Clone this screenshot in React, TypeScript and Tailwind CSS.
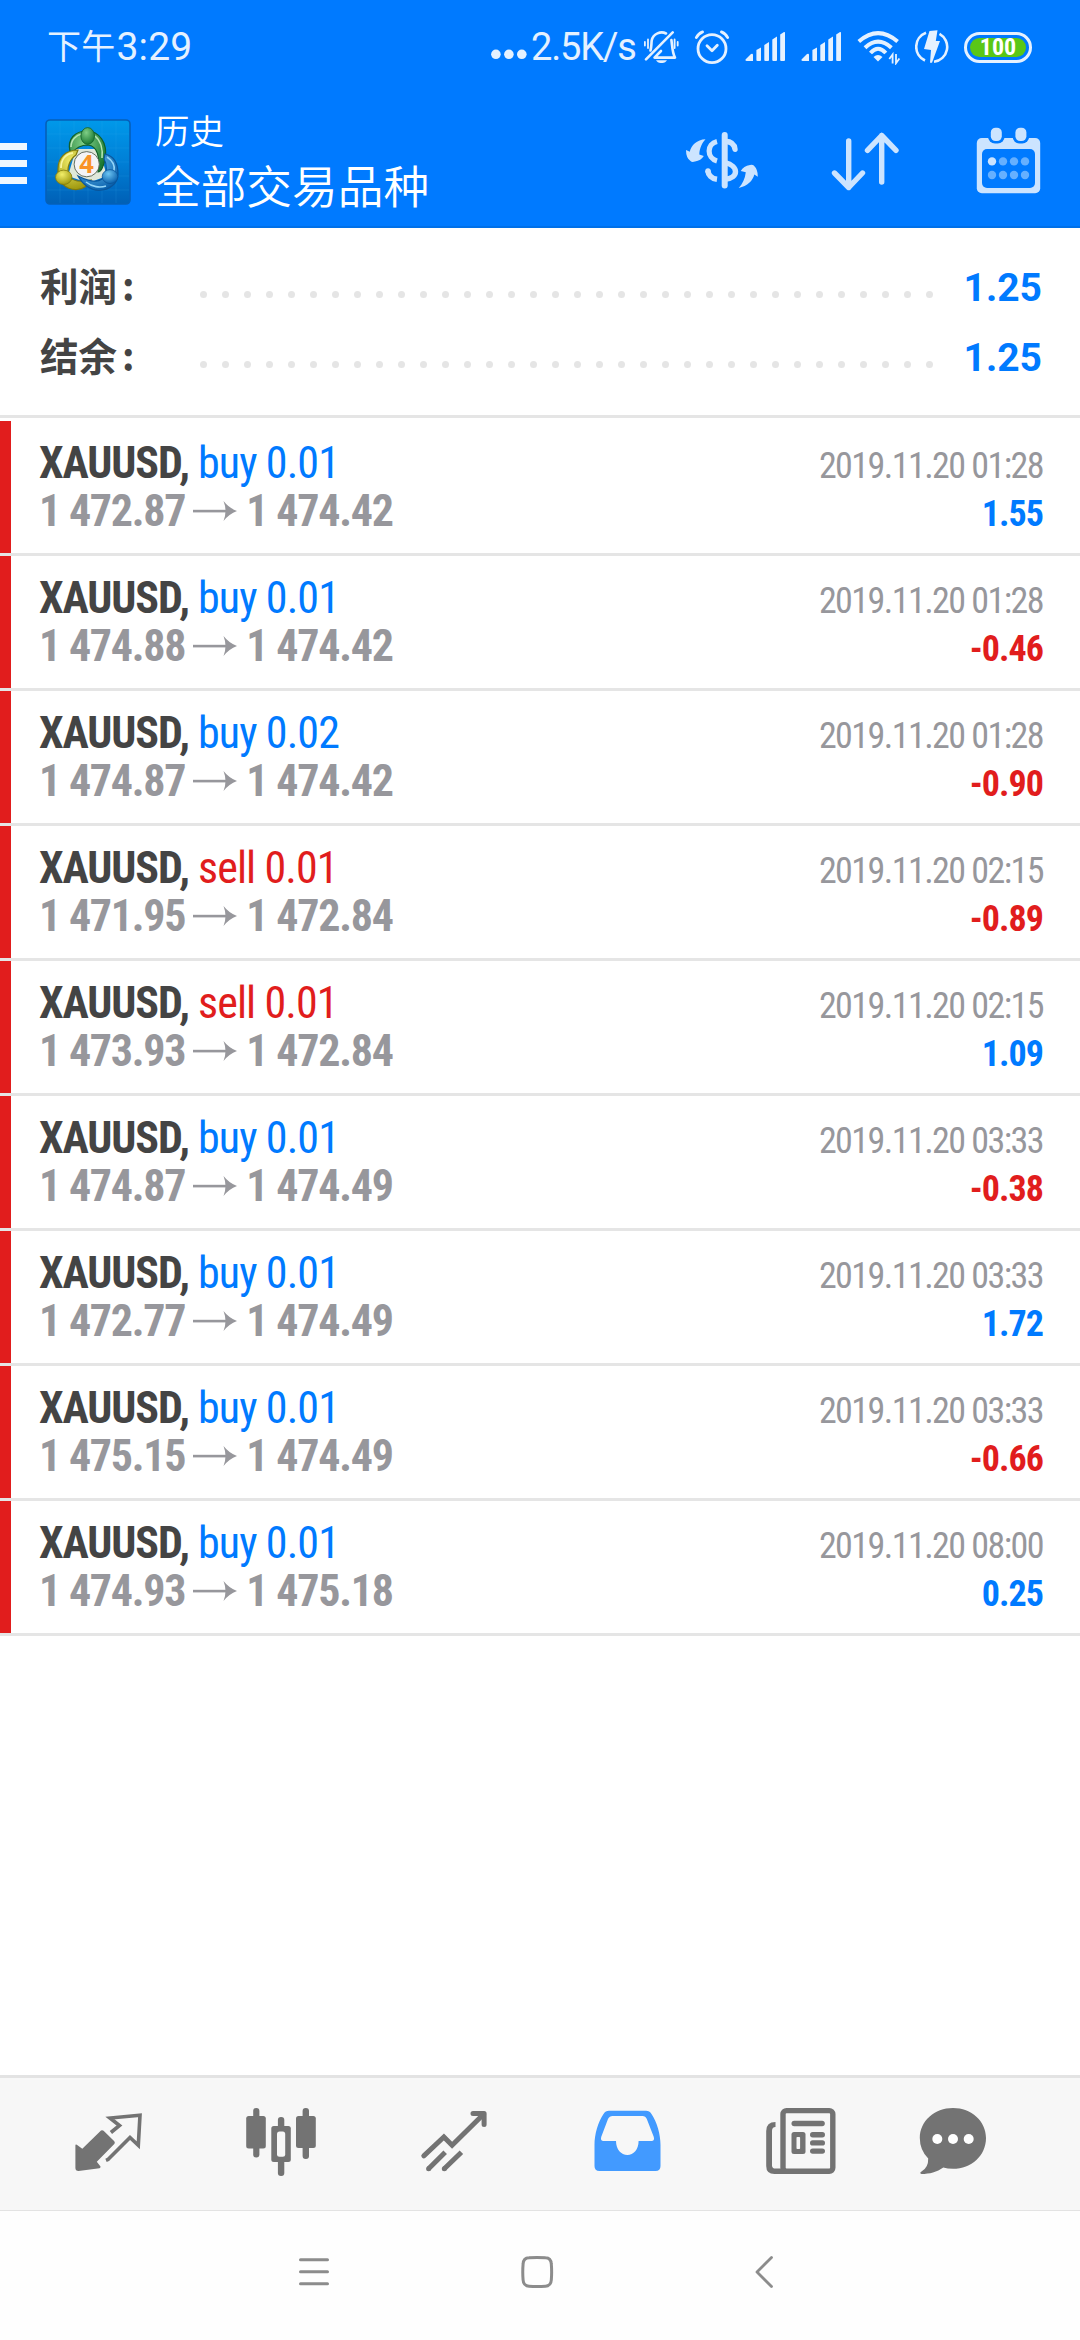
import type { ReactNode } from "react";

type Deal = {
  side: "buy" | "sell";
  volume: string;
  open: string;
  close: string;
  time: string;
  profit: string;
};

const deals: Deal[] = [
  { side: "buy", volume: "0.01", open: "1 472.87", close: "1 474.42", time: "2019.11.20 01:28", profit: "1.55" },
  { side: "buy", volume: "0.01", open: "1 474.88", close: "1 474.42", time: "2019.11.20 01:28", profit: "-0.46" },
  { side: "buy", volume: "0.02", open: "1 474.87", close: "1 474.42", time: "2019.11.20 01:28", profit: "-0.90" },
  { side: "sell", volume: "0.01", open: "1 471.95", close: "1 472.84", time: "2019.11.20 02:15", profit: "-0.89" },
  { side: "sell", volume: "0.01", open: "1 473.93", close: "1 472.84", time: "2019.11.20 02:15", profit: "1.09" },
  { side: "buy", volume: "0.01", open: "1 474.87", close: "1 474.49", time: "2019.11.20 03:33", profit: "-0.38" },
  { side: "buy", volume: "0.01", open: "1 472.77", close: "1 474.49", time: "2019.11.20 03:33", profit: "1.72" },
  { side: "buy", volume: "0.01", open: "1 475.15", close: "1 474.49", time: "2019.11.20 03:33", profit: "-0.66" },
  { side: "buy", volume: "0.01", open: "1 474.93", close: "1 475.18", time: "2019.11.20 08:00", profit: "0.25" },
];

function Signal() {
  return (
    <svg className="w-10 h-8" viewBox="745 29 40 32" fill="#e5f1ff">
      <path d="M745.5 57.5 L751 52 Q753 51 753 53 V59 H747 Q745 59 745.5 57.5 Z" />
      <path d="M756.4 48 L761 45.4 V58 Q761 59 760 59 H757.4 Q756.4 59 756.4 58 Z" />
      <path d="M764.3 43 L769 40 V58 Q769 59 768 59 H765.3 Q764.3 59 764.3 58 Z" />
      <path d="M772.3 37.5 L777 34.6 V58 Q777 59 776 59 H773.3 Q772.3 59 772.3 58 Z" />
      <path d="M780.2 32.5 L784 30 Q785 29.6 785 31 V58 Q785 59 784 59 H781.2 Q780.2 59 780.2 58 Z" />
    </svg>
  );
}

function StatusBar() {
  return (
    <div className="flex h-[92px] items-start pt-6 pl-[47px] pr-12 text-[#e5f1ff]">
      <span className="flex flex-1 font-['Roboto',sans-serif] text-[39px] leading-[46px] tracking-[0.2px] whitespace-nowrap">
        <span className="-mt-0.5 mr-px font-['Noto_Sans_CJK_SC',sans-serif] text-[34px]">下午</span>3:29
      </span>
      <svg className="mt-[24px] mr-1 h-3 w-9" viewBox="492 48 36 12" fill="#e5f1ff">
        <circle cx="496.9" cy="54.3" r="4.8" />
        <circle cx="509.9" cy="54.3" r="4.8" />
        <circle cx="522.8" cy="54.3" r="4.8" />
      </svg>
      <span className="w-[112px] font-['Roboto',sans-serif] text-[38px] leading-[46px] tracking-[-1.2px]">2.5K/s</span>
      <div className="flex items-center pt-[5px]">
        {/* Silent mode */}
        <svg className="h-8 w-9" viewBox="643 29 36 32" fill="none" stroke="#e5f1ff" strokeWidth="2.6" strokeLinecap="round">
          <path d="M646 57.3 L672.7 30.4" />
          <path d="M650.5 48.5 C651.5 45 651.3 42 651.7 38.5 C653 31.5 661 28.8 666 31.5" />
          <path d="M671.4 38 C672.4 44 672 50 675 55.6 H654.5 L661 49" strokeLinejoin="round" />
          <path d="M656 58.2 H667 C665 62 658 62 656 58.2 Z" fill="#e5f1ff" stroke="none" />
          <path d="M644.9 40 V43.5 M648 37.5 V46 M674.6 37.5 V46 M677.7 40 V43.5" strokeWidth="1.8" />
        </svg>
        {/* Alarm */}
        <svg className="ml-[15px] h-9 w-9" viewBox="694 27 36 36" fill="none" stroke="#e5f1ff" strokeWidth="2.8" strokeLinecap="round">
          <circle cx="712" cy="46.7" r="14" />
          <path d="M707 43.8 L712 48.8 L717.3 43.2" strokeLinejoin="round" />
          <path d="M696.3 35.6 Q698.5 31.5 702.6 29.9 M721.4 29.9 Q725.5 31.5 727.7 35.6" />
        </svg>
        <div className="ml-[15px] flex gap-4">
          <Signal />
          <Signal />
        </div>
        {/* Wi-Fi */}
        <svg className="ml-4 h-9 w-11" viewBox="857 28 44 36" fill="none" stroke="#e5f1ff" strokeWidth="4">
          <path d="M858.8 40.6 Q878 23.8 897.6 40.6" />
          <path d="M865 46.8 Q878 34.6 891.4 46.8" />
          <path d="M870.5 52 Q878 43.6 885.8 52" />
          <path d="M873.5 56 Q878 52 882.5 56 L878 60.5 Z" fill="#e5f1ff" stroke="none" />
          <path d="M892.6 62.5 V53.5 L889.3 58 M896 53 V62.2 L899.4 57.5" strokeWidth="1.8" />
        </svg>
        {/* Fast charge */}
        <svg className="ml-[14px] h-9 w-[34px]" viewBox="915 28 34 36" fill="none" stroke="#e5f1ff" strokeWidth="2.6">
          <path d="M926 31.8 A15 15 0 0 0 925 59.5 M939.5 32.8 A15 15 0 0 1 934 60.8" />
          <path d="M929.5 30 L937.5 29.3 L935.8 40 H940 L932 61.8 H930 L931 49 L924 48 Z" fill="#e5f1ff" stroke="none" />
        </svg>
        {/* Battery */}
        <div className="ml-[15px] flex h-[31px] w-[68px] rounded-full border-[3px] border-[#e5f1ff] p-[3px]">
          <div className="flex flex-1 items-center justify-center rounded-full bg-[#5ac716] font-['Roboto',sans-serif] font-stretch-condensed text-2xl leading-none font-bold text-white">
            100
          </div>
        </div>
      </div>
    </div>
  );
}

function AppIcon() {
  return (
    <svg className="h-[86px] w-[86px]" viewBox="45 119 86 86">
      <defs>
        <linearGradient id="tile" x1="0" y1="0" x2="0" y2="1">
          <stop offset="0" stopColor="#0099ea" />
          <stop offset="0.5" stopColor="#007fd6" />
          <stop offset="1" stopColor="#0060b6" />
        </linearGradient>
        <radialGradient id="green" cx="0.4" cy="0.3" r="0.7">
          <stop offset="0" stopColor="#7fce86" />
          <stop offset="1" stopColor="#1c7a33" />
        </radialGradient>
        <radialGradient id="yellow" cx="0.4" cy="0.3" r="0.7">
          <stop offset="0" stopColor="#f2ee6a" />
          <stop offset="1" stopColor="#a09a10" />
        </radialGradient>
        <radialGradient id="blue" cx="0.4" cy="0.3" r="0.7">
          <stop offset="0" stopColor="#6cc4f2" />
          <stop offset="1" stopColor="#0b62ae" />
        </radialGradient>
      </defs>
      <rect x="46" y="120" width="84" height="84" rx="4" fill="url(#tile)" stroke="#0560b8" strokeWidth="1.6" />
      <path d="M60 121 V203 M74 121 V203 M88 121 V203 M102 121 V203 M116 121 V203 M47 134 H129 M47 148 H129 M47 162 H129 M47 176 H129 M47 190 H129" stroke="#3fb4f2" strokeWidth="0.6" opacity="0.25" />
      <path d="M76 149 L99 149 L107 176 L88 183 L68 176 Z" fill="#dfe8da" />
      {/* Three linked figures */}
      <path d="M70 151 C67 139 75 131 87 131 C99 131 108 143 105 158 C104 166 101 172 98 172 C100 158 98 146 88 145 C80 145 75 149 72 153 Z" fill="url(#green)" stroke="#11602a" strokeWidth="1.2" />
      <path d="M71 147 C71 140 76 135 82 134 M95 136 C101 141 103 150 102 158" fill="none" stroke="#b6e5b5" strokeWidth="1.6" />
      <path d="M78 150 C65 150 58 158 58 169 C57 182 66 190 77 189.5 C83 189 88 186 91 180 C82 182 73 182 69 176 C66 168 70 159 76 155 Z" fill="url(#yellow)" stroke="#807a0e" strokeWidth="1.2" />
      <path d="M61 168 C61 159 66 154 73 153" fill="none" stroke="#f8f5a0" strokeWidth="1.8" />
      <path d="M105 154 C114 156 118 164 118 174 C118 184 109 190 99 190.5 C91 190 83 185 78 176 C86 180 96 184 102 179 C108 173 107 164 104 159 Z" fill="url(#blue)" stroke="#0a559b" strokeWidth="1.2" />
      <path d="M107 157 C113 161 115 166 114 171 M86 182 C92 187 100 188 106 186" fill="none" stroke="#93d5f8" strokeWidth="1.6" />
      <ellipse cx="87.7" cy="136" rx="6.8" ry="8.4" fill="url(#green)" stroke="#11602a" strokeWidth="0.8" />
      <ellipse cx="63.7" cy="177.3" rx="8.2" ry="7.2" fill="url(#yellow)" stroke="#807a0e" strokeWidth="0.8" />
      <ellipse cx="110" cy="176.6" rx="7.8" ry="7" fill="url(#blue)" stroke="#0a559b" strokeWidth="0.8" />
      <circle cx="86.7" cy="164.2" r="12.6" fill="#f4f4f6" stroke="#55604f" strokeWidth="0.9" />
      <text x="86.6" y="173" textAnchor="middle" fontSize="25.5" fontWeight="700" fontFamily="Open Sans, sans-serif" fill="#f99327">
        4
      </text>
    </svg>
  );
}

function Header() {
  return (
    <div className="flex h-[136px] items-start border-b-2 border-[#0070e8] text-white">
      <div className="flex w-[27px] flex-col gap-[10px] pt-[51px]">
        <div className="h-[7px] bg-[#f0f7ff]" />
        <div className="h-[7px] bg-[#f0f7ff]" />
        <div className="h-[7px] bg-[#f0f7ff]" />
      </div>
      <div className="ml-[18px] pt-[27px]">
        <AppIcon />
      </div>
      <div className="ml-6 flex-1 pt-[14px] font-['Noto_Sans_CJK_SC',sans-serif] font-[350]">
        <div className="text-[34.5px] leading-[46px]">历史</div>
        <div className="text-[45.7px] leading-[65px]">全部交易品种</div>
      </div>
      <div className="flex gap-[70px] pt-[33px] pr-[37px]">
        {/* Currency */}
        <svg className="h-[70px] w-[76px]" viewBox="684 125 76 70" fill="none" stroke="#cce4ff" strokeWidth="5">
          <path d="M724.7 135 V185.5" strokeWidth="6" strokeLinecap="round" />
          <path d="M717 141.5 C706.5 144 706.5 158 717 161" strokeWidth="5.2" />
          <path d="M707.8 170.5 C708.3 175 711.5 178.6 717 179.3" strokeWidth="5.6" />
          <circle cx="708" cy="171" r="2.7" fill="#cce4ff" stroke="none" />
          <path d="M725 141.3 C731 141.6 734.5 144.5 735 149.3" strokeWidth="5.4" strokeLinecap="round" />
          <path d="M725 162.5 C739 166 739 178 725 179.3" strokeWidth="5.4" />
          <path d="M705.5 139.3 C697 139.5 691 145.5 689.8 151.8 L686 150 Q686 158 690.5 161 Q692 162.5 695 161.5 Q701 160.5 703.8 156 L699.3 154.5 C699.5 148.5 702 143 705.5 139.3 Z" fill="#cce4ff" stroke="none" />
          <path d="M738.7 188 C747.5 186 753 180.5 754.3 174.5 L757.8 176.8 Q758 169.5 753.8 165.5 Q752.5 164.5 750 165 Q743.5 166 740.8 171 L745.8 172.3 C745 179 742.5 184 738.7 188 Z" fill="#cce4ff" stroke="none" />
        </svg>
        {/* Sort */}
        <svg className="h-[70px] w-[70px]" viewBox="830 125 70 70" fill="none" stroke="#cce4ff" strokeWidth="5.4" strokeLinecap="round" strokeLinejoin="round">
          <path d="M848.7 141 V187.5 M834.5 173 L848.7 187.5 L862.5 173" />
          <path d="M881.7 182 V135.5 M867.5 150.3 L881.7 135.5 L896 150.3" />
        </svg>
        {/* Calendar */}
        <svg className="h-[70px] w-[73px]" viewBox="970 125 73 70" fill="#cce4ff">
          <rect x="976.8" y="138" width="63.4" height="55.3" rx="5" />
          <rect x="982" y="149" width="53" height="39" rx="5" fill="#007aff" />
          <rect x="988" y="125" width="16.6" height="18.5" rx="7" fill="#007aff" />
          <rect x="1012.6" y="125" width="16.6" height="18.5" rx="7" fill="#007aff" />
          <rect x="990.8" y="127.7" width="11" height="13.4" rx="4.8" />
          <rect x="1015.4" y="127.7" width="11" height="13.4" rx="4.8" />
          <circle cx="992" cy="161.4" r="4.2" />
          {[1003, 1014, 1025].map((x) => (
            <circle key={x} cx={x} cy="161.4" r="4.2" fill="#66b0ff" />
          ))}
          {[992, 1003, 1014, 1025].map((x) => (
            <circle key={x} cx={x} cy="175" r="4.2" fill="#66b0ff" />
          ))}
        </svg>
      </div>
    </div>
  );
}

function SummaryRow({ label, value }: { label: string; value: string }) {
  return (
    <div className="flex h-[70px] items-start">
      <div className="-mt-[3px] flex w-[160px] font-['Noto_Sans_CJK_SC',sans-serif] text-[38.5px] leading-[70px] font-bold text-[#444]">
        {label}
        <span className="pl-[5px]">:</span>
      </div>
      <div className="mt-[39px] flex w-[733px] justify-between">
        {Array.from({ length: 34 }, (_, i) => (
          <span key={i} className="size-[7px] rounded-full bg-[#e5e5e5]" />
        ))}
      </div>
      <div className="mt-px flex-1 text-right font-['Roboto',sans-serif] text-[39px] leading-[70px] font-bold text-[#007aff]">{value}</div>
    </div>
  );
}

function DealRow({ deal }: { deal: Deal }) {
  const sideColor = deal.side === "buy" ? "text-[#007aff]" : "text-[#e11d1d]";
  const profitColor = deal.profit.startsWith("-") ? "text-[#e11d1d]" : "text-[#007aff]";

  return (
    <div className="flex h-[135px] border-b-3 border-[#e5e5e5] font-['Roboto',sans-serif] font-stretch-condensed leading-12 whitespace-nowrap">
      <div className="w-[11px] bg-[#e11d1d]" />
      <div className="flex-1 pt-[18px] pl-7 text-[44px]">
        <div className="tracking-[-0.9px]">
          <span className="font-bold tracking-[-1.1px] text-[#444]">XAUUSD,</span> <span className={sideColor}>{deal.side} {deal.volume}</span>
        </div>
        <div className="flex items-center font-bold tracking-[-1.25px] text-[#97979c]">
          <span>{deal.open}</span>
          <svg className="mr-2 ml-[7px] h-6 w-[46px]" viewBox="0 0 46 24" fill="#97979c">
            <rect x="1" y="10.8" width="38" height="2.6" />
            <path d="M31.5 2 Q37 9 45 12 Q37 15 31.5 22 Q33.5 17 33.5 12 Q33.5 7 31.5 2 Z" />
          </svg>
          <span>{deal.close}</span>
        </div>
      </div>
      <div className="pt-[21px] pr-[37px] text-right text-4xl leading-12">
        <div className="leading-12 tracking-[-1.55px] text-[#97979c]">{deal.time}</div>
        <div className={`leading-12 font-bold tracking-[-0.95px] ${profitColor}`}>{deal.profit}</div>
      </div>
    </div>
  );
}

function Tab({ width, children }: { width: string; children: ReactNode }) {
  return <div className={`flex h-full items-center ${width}`}>{children}</div>;
}

function TabBar() {
  return (
    <div className="flex h-[136px] border-t-3 border-b border-[#e3e3e3] bg-[#f7f7f7] pb-[2px] pl-[70px]">
      <Tab width="w-[171px]">
        <svg className="h-20 w-20" viewBox="70 2103 80 80" fill="#737373">
          <path d="M75.4 2145.5 Q75.4 2144 76.8 2144.8 L82.3 2148.7 L101 2130.6 Q102.3 2129.6 103.6 2130.8 L114.3 2141.3 Q115.4 2142.7 114.3 2144 L96.8 2161.7 L100.5 2166.5 Q100.8 2167.8 99.5 2168.2 L78.5 2171 Q75.4 2171 75.4 2168 Z" />
          <path d="M110.9 2132.5 L119.5 2125.5 L110 2118 L140 2115.2 L138.3 2145.3 L130 2137.5 L108 2159.5 L106 2160.3" fill="none" stroke="#737373" strokeWidth="3.6" />
        </svg>
      </Tab>
      <Tab width="w-[177px]">
        <svg className="h-20 w-20" viewBox="241 2103 80 80" fill="#737373">
          <rect x="253.2" y="2108" width="6.2" height="49.5" rx="3" />
          <rect x="246.2" y="2116" width="19.6" height="32.5" rx="2.5" />
          <rect x="277.9" y="2117" width="6.4" height="59" rx="3" />
          <rect x="271.3" y="2126" width="19.5" height="36" rx="2.5" />
          <rect x="277" y="2131.4" width="8.2" height="25.4" rx="2.5" fill="#f7f7f7" />
          <rect x="302.6" y="2108" width="6.4" height="51" rx="3" />
          <rect x="296" y="2116" width="19.8" height="32" rx="2.5" />
        </svg>
      </Tab>
      <Tab width="w-[172px]">
        <svg className="h-20 w-20" viewBox="418 2103 80 80" fill="none" stroke="#737373" strokeWidth="5">
          <path d="M423.8 2155.8 L443.9 2137 L452.1 2145.3 L483.5 2114.2" strokeLinecap="round" />
          <path d="M473 2113.4 H484.1 V2124.5" strokeLinecap="round" strokeLinejoin="round" />
          <path d="M428.6 2168.8 L445.2 2152.2 M444.3 2168.8 L461.4 2152.2" />
          <path d="M428.6 2168.8 h0.01 M444.3 2168.8 h0.01" strokeLinecap="round" />
        </svg>
      </Tab>
      <Tab width="w-[171px]">
        <svg className="h-20 w-20" viewBox="590 2103 80 80">
          <path d="M609 2110.8 H646 Q649.5 2110.8 651.5 2114 C657 2122 660.5 2134 660.5 2145 V2166 Q660.5 2171 655.5 2171 H599.5 Q594.5 2171 594.5 2166 V2145 C594.5 2134 598 2122 603.5 2114 Q605.5 2110.8 609 2110.8 Z" fill="#429aff" />
          <path d="M612.5 2116 H642.5 Q645.5 2116 646.8 2119 L653.8 2137 Q654.8 2141 651.5 2141 H638.6 C638.6 2149.5 633.5 2155 627.4 2155 C621.3 2155 616 2149.5 616 2141 H603.5 Q600.2 2141 601.2 2137 L608 2119 Q609.5 2116 612.5 2116 Z" fill="#f7f7f7" />
        </svg>
      </Tab>
      <Tab width="w-[154px]">
        <svg className="h-20 w-20" viewBox="761 2103 80 80" fill="#737373">
          <rect x="783" y="2110.6" width="49.8" height="60.7" rx="3.5" fill="none" stroke="#737373" strokeWidth="5.4" />
          <path d="M775.5 2122 Q766.2 2122 766.2 2131 V2166 Q766.2 2174 774.5 2174 H786 V2168.6 H775.5 Q772 2168.6 772 2165.5 V2131 Q772 2127 775.5 2127 Z" />
          <rect x="791.5" y="2120.8" width="33.3" height="5.4" rx="2.7" />
          <rect x="791.5" y="2132" width="14" height="22" rx="2.5" />
          <rect x="796.5" y="2137" width="3.6" height="12" rx="0.8" fill="#f7f7f7" />
          <rect x="810" y="2132" width="15" height="5.4" rx="2.7" />
          <rect x="810" y="2140.2" width="15" height="5.4" rx="2.7" />
          <rect x="810" y="2148.4" width="15" height="5.4" rx="2.7" />
        </svg>
      </Tab>
      <Tab width="w-20">
        <svg className="h-20 w-20" viewBox="915 2103 80 80" fill="#737373">
          <path d="M953 2108 C971.5 2108 986 2121 986 2138 C986 2155.5 971.5 2168.8 953 2168.8 Q947.5 2168.8 943.3 2167.5 C937 2172 929.5 2174 921.5 2174 Q919 2173 921.5 2171.5 Q928.5 2167.5 928.2 2158.5 Q919.8 2150 919.8 2138 C919.8 2121 934.5 2108 953 2108 Z" />
          <g fill="#fff">
            <circle cx="937.3" cy="2139" r="5" />
            <circle cx="953" cy="2139" r="5" />
            <circle cx="968.7" cy="2139" r="5" />
          </g>
        </svg>
      </Tab>
    </div>
  );
}

function SystemNav() {
  return (
    <div className="flex h-[129px] items-center bg-[#fefefe] pb-[7px] pl-[294px]">
      <svg className="h-10 w-10" viewBox="294 2252 40 40" fill="none" stroke="#8c8c8c" strokeWidth="3" strokeLinecap="round">
        <path d="M300.5 2259.8 H327.5 M300.5 2271.8 H327.5 M300.5 2283.8 H327.5" />
      </svg>
      <svg className="ml-[183px] h-10 w-10" viewBox="517 2252 40 40" fill="none" stroke="#8c8c8c" strokeWidth="3">
        <path d="M529 2257.8 Q537 2257 545.5 2257.8 Q551 2258 551.3 2264 Q552 2272 551.3 2280 Q551 2285.8 545.5 2286.2 Q537 2287 529 2286.2 Q523.4 2285.8 523.1 2280 Q522.4 2272 523.1 2264 Q523.4 2258 529 2257.8 Z" />
      </svg>
      <svg className="ml-[188px] h-10 w-10" viewBox="745 2252 40 40" fill="none" stroke="#8c8c8c" strokeWidth="2.8" strokeLinecap="round" strokeLinejoin="round">
        <path d="M771.5 2257.5 L757 2272 L771.5 2286.6" />
      </svg>
    </div>
  );
}

export default function App() {
  return (
    <div className="flex h-[2340px] w-[1080px] flex-col overflow-hidden bg-white">
      <div className="bg-[#007aff]">
        <StatusBar />
        <Header />
      </div>
      <div className="border-b-3 border-[#e5e5e5] pt-6 pr-[38px] pb-[23px] pl-10">
        <SummaryRow label="利润" value="1.25" />
        <SummaryRow label="结余" value="1.25" />
      </div>
      <div className="flex-1 pt-[3px]">
        {deals.map((deal, i) => (
          <DealRow key={i} deal={deal} />
        ))}
      </div>
      <TabBar />
      <SystemNav />
    </div>
  );
}
